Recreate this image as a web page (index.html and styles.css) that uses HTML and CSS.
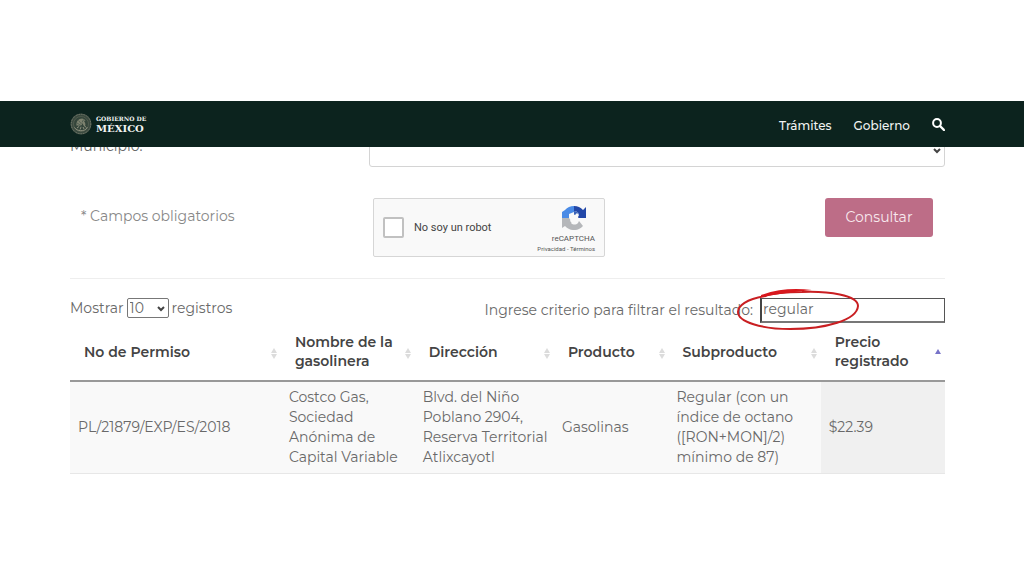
FILE: index.html
```html
<!DOCTYPE html>
<html lang="es">
<head>
<meta charset="utf-8">
<title>Gobierno de México</title>
<link rel="stylesheet" href="styles.css">
</head>
<body>
<header class="topbar">
  <a class="brand" href="#">
    <svg class="seal" viewBox="0 0 44 44" aria-hidden="true">
      <circle cx="22" cy="22" r="21" fill="#3b4a40"/>
      <circle cx="22" cy="22" r="19.500" fill="none" stroke="#7f8374" stroke-width="2" stroke-dasharray="2 1.500"/>
      <circle cx="22" cy="22" r="15" fill="#34453b" stroke="#69705f" stroke-width="1"/>
      <path d="M13 25c-1-8 4-14 11-14 3 0 6 2 7 5l-4-1c3 3 5 7 3 12-3-1-4-4-5-7-1 5-5 8-12 5z" fill="#7d826f"/>
      <path d="M17 15l6 7m-9-2 8 5m-8 0 10 2m3-14-3 6" stroke="#46564b" stroke-width="1.500" fill="none"/>
      <path d="M9 29c5 8 20 9 26 0m-21 1 4-3m2 6 2-5m6 4-2-4m7 1-4-3" stroke="#8f917f" stroke-width="2" fill="none"/>
    </svg>
    <span class="brand-text"><span class="brand-small">GOBIERNO DE</span><span class="brand-big">MÉXICO</span></span>
  </a>
  <nav class="nav">
    <a href="#">Trámites</a>
    <a href="#">Gobierno</a>
    <a class="search-link" href="#" aria-label="Buscar">
      <svg viewBox="0 0 13 13" aria-hidden="true"><circle cx="5" cy="5" r="3.900" fill="none" stroke="#fff" stroke-width="2"/><path d="M8 8l4 4" stroke="#fff" stroke-width="2.400" stroke-linecap="round"/></svg>
    </a>
  </nav>
</header>
<main class="content">
  <form class="query">
    <div class="field">
      <label for="municipio">Municipio:</label>
      <div class="select-wrap">
        <select class="wide-select" id="municipio"><option></option></select>
        <svg class="chevron" viewBox="0 0 8 6" aria-hidden="true"><path d="M1 1l3 3 3-3"/></svg>
      </div>
    </div>
    <div class="actions">
      <p class="required">* Campos obligatorios</p>
      <div class="captcha">
        <input type="checkbox" id="robot">
        <label for="robot">No soy un robot</label>
        <div class="captcha-brand">
          <svg viewBox="0 0 24 24" aria-hidden="true">
            <path d="M12 0A12 12 0 0 0 3 4L0 6v6h7V8l5-2z" fill="#4a8be6"/>
            <path d="M12 0a12 12 0 0 1 9 4l3-3v11H13l4-4c-1-2-3-3-5-3z" fill="#2348a8"/>
            <path d="M0 12h7l3 4-1 1c2 2 5 2 7 0l1-2 4 5A12 12 0 0 1 3 20l-3 2z" fill="#b5b7ba"/>
            <path d="M12 5c2 0 4 1 5 3l-4 4-1 1z" fill="#3b64b8"/>
            <path d="M7 11l1-2 2 1 1-2 2 1 2-2 2 2-1 2 1 2-2 1v2l-3-1-2 2-2-2 1-2z" fill="#f9f9f9"/>
          </svg>
          <span class="captcha-name">reCAPTCHA</span>
          <span class="captcha-links"><a href="#">Privacidad</a> - <a href="#">Términos</a></span>
        </div>
      </div>
      <button class="submit" type="button">Consultar</button>
    </div>
  </form>
  <section class="results">
    <div class="tools">
      <div class="length">
        <label for="length">Mostrar</label>
        <div class="select-wrap">
          <select class="length-select" id="length"><option>10</option></select>
          <svg class="chevron" viewBox="0 0 8 6" aria-hidden="true"><path d="M1 1l3 3 3-3"/></svg>
        </div>
        <span>registros</span>
      </div>
      <div class="filter">
        <label for="filter">Ingrese criterio para filtrar el resultado:</label>
        <div class="filter-box">
          <input type="text" id="filter" value="regular">
          <svg class="mark" viewBox="0 0 124 46" aria-hidden="true">
            <path d="M30 8C10 11 2 18 2 24c0 10 24 17 52 17 36 0 67-9 68-23C122 7 92 3 66 4 50 4 38 5 28 8" fill="none" stroke="#c91f22" stroke-width="2" stroke-linecap="round"/>
            <path d="M25 7C42 1 58 0 76 2L50 5 25 9z" fill="#d8171d"/>
          </svg>
        </div>
      </div>
    </div>
    <table class="grid">
      <colgroup><col class="c-permit"><col class="c-name"><col class="c-address"><col class="c-product"><col class="c-sub"><col class="c-price"></colgroup>
      <thead>
        <tr>
          <th class="sortable">No de Permiso</th>
          <th class="sortable">Nombre de la gasolinera</th>
          <th class="sortable">Dirección</th>
          <th class="sortable">Producto</th>
          <th class="sortable">Subproducto</th>
          <th class="sorted">Precio registrado</th>
        </tr>
      </thead>
      <tbody>
        <tr>
          <td>PL/21879/EXP/ES/2018</td>
          <td>Costco Gas,<br>Sociedad<br>Anónima de<br>Capital Variable</td>
          <td>Blvd. del Niño<br>Poblano 2904,<br>Reserva Territorial<br>Atlixcayotl</td>
          <td>Gasolinas</td>
          <td>Regular (con un<br>índice de octano<br>([RON+MON]/2)<br>mínimo de 87)</td>
          <td class="price">$22.39</td>
        </tr>
      </tbody>
    </table>
  </section>
</main>
</body>
</html>
```
FILE: styles.css
```css
* { box-sizing: border-box; }
body {
  margin: 0;
  padding-top: 101px;
  background: #fff;
  color: #696969;
  font: 14px/20px Montserrat, Inter, sans-serif;
}
a { color: inherit; text-decoration: none; }
input, select, button { font: inherit; color: inherit; margin: 0; }

.topbar {
  position: relative;
  z-index: 1;
  display: flex;
  justify-content: space-between;
  align-items: center;
  height: 46px;
  padding: 0 79px 0 70px;
  background: #0c231e;
  color: #f2f4f3;
}
.brand { display: flex; align-items: center; gap: 4px; }
.seal { width: 22px; height: 22px; }
.brand-text { display: flex; flex-direction: column; font-family: "DejaVu Serif", serif; font-weight: 700; }
.brand-small { font-size: 6px; line-height: 8px; }
.brand-big { font-size: 10px; line-height: 11px; }
.nav { display: flex; align-items: center; gap: 22px; padding-top: 3px; font-size: 12px; font-weight: 500; }
.search-link { display: flex; padding-bottom: 2px; }
.search-link svg { width: 13px; height: 13px; }

.content { padding: 0 79px 0 70px; }
.field { display: flex; align-items: center; margin-top: -14px; }
.field label { flex: 0 0 299px; padding-bottom: 8px; }
.field .select-wrap { flex: 1; }
.select-wrap { position: relative; display: flex; }
.select-wrap select { appearance: none; background: #fff; }
.wide-select { width: 100%; height: 34px; border: 1px solid #d4d4d4; border-radius: 3px; }
.chevron { position: absolute; right: 4px; top: 50%; width: 8px; height: 6px; margin-top: -2px; pointer-events: none; }
.chevron path { fill: none; stroke: #444; stroke-width: 2; }

.actions {
  display: flex;
  align-items: flex-start;
  margin-top: 31px;
  padding: 0 12px 21px 11px;
  border-bottom: 1px solid #eee;
}
.required { flex: 0 0 292px; margin: 8px 0 0; color: #888; }
.captcha {
  display: flex;
  align-items: center;
  width: 232px;
  height: 59px;
  padding: 0 9px;
  background: #f9f9f9;
  border: 1px solid #d6d6d6;
  border-radius: 2px;
  color: #444;
  font-family: Roboto, sans-serif;
  font-size: 11px;
}
.captcha input { appearance: none; width: 21px; height: 21px; margin-right: 10px; border: 2px solid #c1c1c1; border-radius: 2px; background: #fff; }
.captcha-brand { display: flex; flex-direction: column; align-items: flex-end; margin-left: auto; color: #555; }
.captcha-brand svg { width: 24px; height: 24px; margin: 3px 9px 4px 0; }
.captcha-name { font-size: 8px; line-height: 10px; }
.captcha-links { font-size: 6px; line-height: 9px; }
.submit { margin-left: auto; width: 108px; height: 39px; padding: 0 0 2px; border: 0; border-radius: 3px; background: #bd6d87; color: #f8e9ee; }

.tools { display: flex; justify-content: space-between; align-items: flex-start; margin-top: 19px; }
.length { display: flex; align-items: center; gap: 3px; }
.length-select { width: 42px; height: 20px; padding: 0 2px; border: 1px solid #777; border-radius: 2px; line-height: 18px; }
.filter { display: flex; align-items: center; gap: 7px; }
.filter label { padding-bottom: 2px; }
.filter-box { position: relative; display: flex; }
.filter-box input { width: 185px; height: 25px; padding: 0 1px 2px; border: 1px solid #555; border-left: 2px solid #444; border-bottom: 2px solid #777; border-radius: 0; background: transparent; }
.mark { position: absolute; left: -24px; top: -10px; width: 124px; height: 46px; pointer-events: none; }

.grid { width: 100%; margin-top: 9px; border-collapse: separate; border-spacing: 0; table-layout: fixed; }
.c-permit { width: 24.1%; }
.c-name { width: 15.3%; }
.c-address { width: 15.9%; }
.c-product { width: 13.1%; }
.c-sub { width: 17.4%; }
.c-price { width: 14.2%; }
th { position: relative; height: 50px; padding: 0 18px 8px 14px; border-bottom: 2px solid #999; color: #444; font-weight: 600; text-align: left; line-height: 19px; }
th.sortable::before, th.sortable::after, th.sorted::before { content: ""; position: absolute; right: 4px; border: 3px solid transparent; }
th.sortable::before { bottom: 27px; border-width: 0 3px 5px; border-bottom-color: #dcdcdc; }
th.sortable::after { bottom: 21px; border-width: 5px 3px 0; border-top-color: #dcdcdc; }
th.sorted::before { bottom: 26px; border-width: 0 3px 5px; border-bottom-color: #7773c8; }
td { height: 92px; padding: 4px 0 6px 8px; border-bottom: 1px solid #e7e7e7; background: #f9f9f9; white-space: nowrap; }
td.price { background: #f0f0f0; }
```
